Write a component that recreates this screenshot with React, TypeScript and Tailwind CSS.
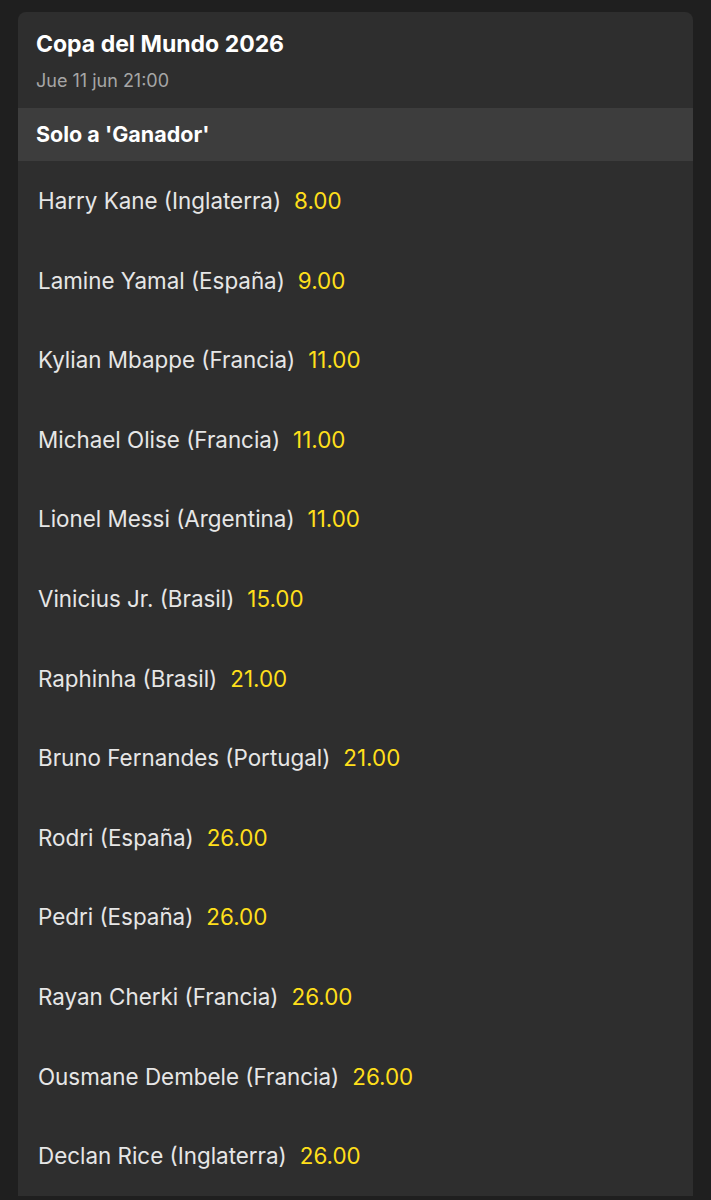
import React from "react";

interface Runner {
  name: string;
  odds: string;
}

const runners: Runner[] = [
  { name: "Harry Kane (Inglaterra)", odds: "8.00" },
  { name: "Lamine Yamal (España)", odds: "9.00" },
  { name: "Kylian Mbappe (Francia)", odds: "11.00" },
  { name: "Michael Olise (Francia)", odds: "11.00" },
  { name: "Lionel Messi (Argentina)", odds: "11.00" },
  { name: "Vinicius Jr. (Brasil)", odds: "15.00" },
  { name: "Raphinha (Brasil)", odds: "21.00" },
  { name: "Bruno Fernandes (Portugal)", odds: "21.00" },
  { name: "Rodri (España)", odds: "26.00" },
  { name: "Pedri (España)", odds: "26.00" },
  { name: "Rayan Cherki (Francia)", odds: "26.00" },
  { name: "Ousmane Dembele (Francia)", odds: "26.00" },
  { name: "Declan Rice (Inglaterra)", odds: "26.00" },
];

export default function App() {
  return (
    <div className="min-h-[1200px] w-[711px] overflow-hidden bg-[#1f1f1f] pt-3 pl-[18px] pr-[18px] font-['Inter','Liberation_Sans',sans-serif]">
      <div className="rounded-t-lg bg-[#2e2e2e]">
        <div className="flex h-[96px] flex-col pl-[18px] pt-[18px]">
          <h1 className="text-[23px] leading-7 font-bold text-white">Copa del Mundo 2026</h1>
          <p className="mt-3 text-[18px] leading-[22px] text-[#a6a6a6]">Jue 11 jun 21:00</p>
        </div>
        <div className="flex h-[53px] items-center bg-[#3d3d3d] pl-[18px]">
          <span className="text-[21.5px] font-bold text-white">Solo a 'Ganador'</span>
        </div>
        <ul>
          {runners.map((r) => (
            <li key={r.name} className="flex h-[79.6px] items-center gap-[13px] pl-5">
              <span className="text-[22.4px] text-[#e6e6e6]">{r.name}</span>
              <span className="text-[22.4px] text-[#ffdf1b]">{r.odds}</span>
            </li>
          ))}
        </ul>
      </div>
    </div>
  );
}
